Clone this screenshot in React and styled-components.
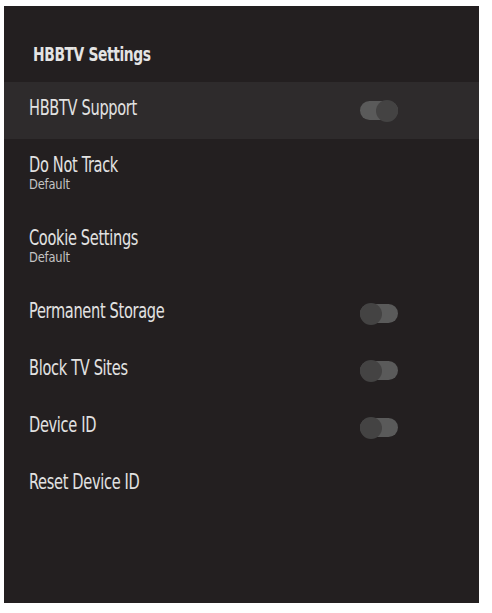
import React from 'react';
import styled, { createGlobalStyle } from 'styled-components';

const GlobalStyle = createGlobalStyle`
  body {
    margin: 0;
    background: #ffffff;
    font-family: "DejaVu Sans Condensed", "DejaVu Sans", sans-serif;
    font-stretch: condensed;
  }
`;

const SETTINGS = [
  { label: 'HBBTV Support', toggle: true, on: true, focused: true },
  { label: 'Do Not Track', sub: 'Default' },
  { label: 'Cookie Settings', sub: 'Default' },
  { label: 'Permanent Storage', toggle: true },
  { label: 'Block TV Sites', toggle: true },
  { label: 'Device ID', toggle: true },
  { label: 'Reset Device ID' },
];

const Page = styled.div`
  padding: 6px 13px 10px 4px;
`;

const Panel = styled.div`
  width: 475px;
  height: 597px;
  background: #231f20;
  display: flex;
  flex-direction: column;
`;

const Title = styled.h1`
  margin: 0;
  height: 76px;
  display: flex;
  align-items: center;
  padding: 19px 0 0 29px;
  box-sizing: border-box;
  font-size: 20px;
  font-weight: bold;
  letter-spacing: -0.5px;
  color: #e4e4e4;
  span {
    display: inline-block;
    transform: scaleX(0.77);
    transform-origin: left center;
  }
`;

const Row = styled.div`
  display: flex;
  align-items: center;
  justify-content: space-between;
  height: ${(p) => (p.tall ? 73 : 57)}px;
  padding: 0 81px 0 25px;
  background: ${(p) => (p.focused ? '#2e2b2c' : 'transparent')};
`;

const Labels = styled.div`
  display: flex;
  flex-direction: column;
  align-items: flex-start;
  margin-top: -6px;
`;

const Label = styled.span`
  display: inline-block;
  font-size: 20.5px;
  letter-spacing: -0.4px;
  color: #e2e2e2;
  line-height: 22px;
  transform: scaleX(0.79);
  transform-origin: left center;
`;

const Sub = styled.span`
  display: inline-block;
  font-size: 14.5px;
  letter-spacing: -0.2px;
  color: #c4c4c4;
  line-height: 14px;
  margin-top: 1px;
  transform: scaleX(0.88);
  transform-origin: left center;
`;

const Track = styled.div`
  position: relative;
  width: 38px;
  height: 19px;
  border-radius: 10px;
  background: #5a5a5a;
`;

const Knob = styled.div`
  position: absolute;
  top: -1.5px;
  left: ${(p) => (p.on ? '16px' : '0')};
  width: 22px;
  height: 22px;
  border-radius: 50%;
  background: #444343;
`;

const Toggle = ({ on }) => (
  <Track>
    <Knob on={on ? 1 : 0} />
  </Track>
);

export default function App() {
  return (
    <Page>
      <GlobalStyle />
      <Panel>
        <Title>
          <span>HBBTV Settings</span>
        </Title>
        {SETTINGS.map((s) => (
          <Row key={s.label} tall={s.sub ? 1 : 0} focused={s.focused ? 1 : 0}>
            <Labels>
              <Label>{s.label}</Label>
              {s.sub && <Sub>{s.sub}</Sub>}
            </Labels>
            {s.toggle && <Toggle on={s.on} />}
          </Row>
        ))}
      </Panel>
    </Page>
  );
}
